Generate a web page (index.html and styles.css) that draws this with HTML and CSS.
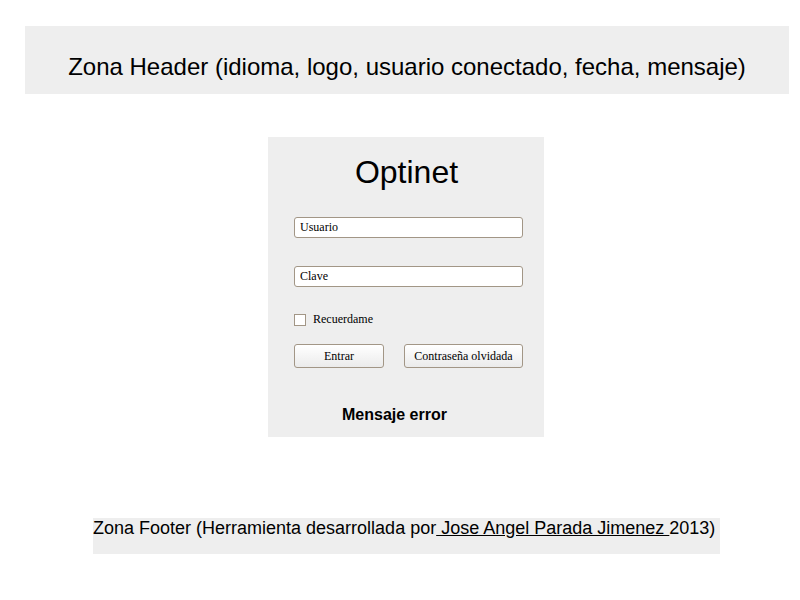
FILE: index.html
```html
<!DOCTYPE html>
<html>
<head>
<meta charset="utf-8">
<link rel="stylesheet" href="styles.css">
</head>
<body>
<div class="page">
  <div class="header">Zona Header (idioma, logo, usuario conectado, fecha, mensaje)</div>
  <div class="login">
    <div class="title">Optinet</div>
    <input class="field" type="text" value="Usuario">
    <input class="field field-second" type="text" value="Clave">
    <label class="remember"><span class="check"></span>Recuerdame</label>
    <div class="buttons">
      <button class="btn btn-enter">Entrar</button>
      <button class="btn btn-forgot">Contraseña olvidada</button>
    </div>
    <div class="error">Mensaje error</div>
  </div>
  <div class="footer">Zona Footer (Herramienta desarrollada por<a href="#" class="author"> Jose Angel Parada Jimenez </a>2013)</div>
</div>
</body>
</html>
```

FILE: styles.css
```css
html, body {
  margin: 0;
  padding: 0;
  background: #ffffff;
}
.page {
  width: 764px;
  margin-left: 25px;
  padding-top: 26px;
  display: flex;
  flex-direction: column;
  align-items: center;
  font-family: "Liberation Sans", Arial, sans-serif;
  color: #000;
}
.header {
  width: 764px;
  height: 68px;
  box-sizing: border-box;
  padding-top: 14px;
  background: #eeeeee;
  display: flex;
  align-items: center;
  justify-content: center;
  font-size: 24px;
}
.login {
  margin-top: 43px;
  margin-left: -2px;
  width: 276px;
  height: 300px;
  box-sizing: border-box;
  background: #eeeeee;
  padding: 17px 21px 0 26px;
  display: flex;
  flex-direction: column;
}
.title {
  font-size: 32px;
  line-height: 37px;
  text-align: center;
  margin: 0 2px 0 -2px;
}
.field {
  margin: 26px 0 0 0;
  width: 229px;
  height: 21px;
  box-sizing: border-box;
  border: 1px solid #a29686;
  border-radius: 3px;
  background: #fff;
  padding: 0 5px;
  font-family: "Liberation Serif", "Times New Roman", serif;
  font-size: 12px;
  color: #000;
  outline: none;
}
.field-second {
  margin-top: 28px;
}
.remember {
  margin-top: 26px;
  display: flex;
  align-items: center;
  font-family: "Liberation Serif", "Times New Roman", serif;
  font-size: 12px;
  height: 13px;
}
.check {
  width: 12px;
  height: 12px;
  box-sizing: border-box;
  border: 1px solid #a29686;
  background: #fff;
  margin-right: 7px;
}
.buttons {
  margin-top: 18px;
  display: flex;
  justify-content: space-between;
  width: 229px;
}
.btn {
  height: 24px;
  box-sizing: border-box;
  border: 1px solid #a29686;
  border-radius: 3px;
  background: linear-gradient(#ffffff, #ebebeb);
  font-family: "Liberation Serif", "Times New Roman", serif;
  font-size: 12px;
  color: #000;
  padding: 0;
}
.btn-enter {
  width: 90px;
}
.btn-forgot {
  width: 119px;
}
.error {
  margin-top: 38px;
  font-size: 16px;
  font-weight: bold;
  line-height: 18px;
  padding-left: 48px;
}
.footer {
  margin-top: 81px;
  margin-left: -1px;
  width: 627px;
  height: 36px;
  background: #eeeeee;
  font-size: 18px;
  line-height: 21px;
}
.author {
  color: #000;
  text-decoration: underline;
}
```
